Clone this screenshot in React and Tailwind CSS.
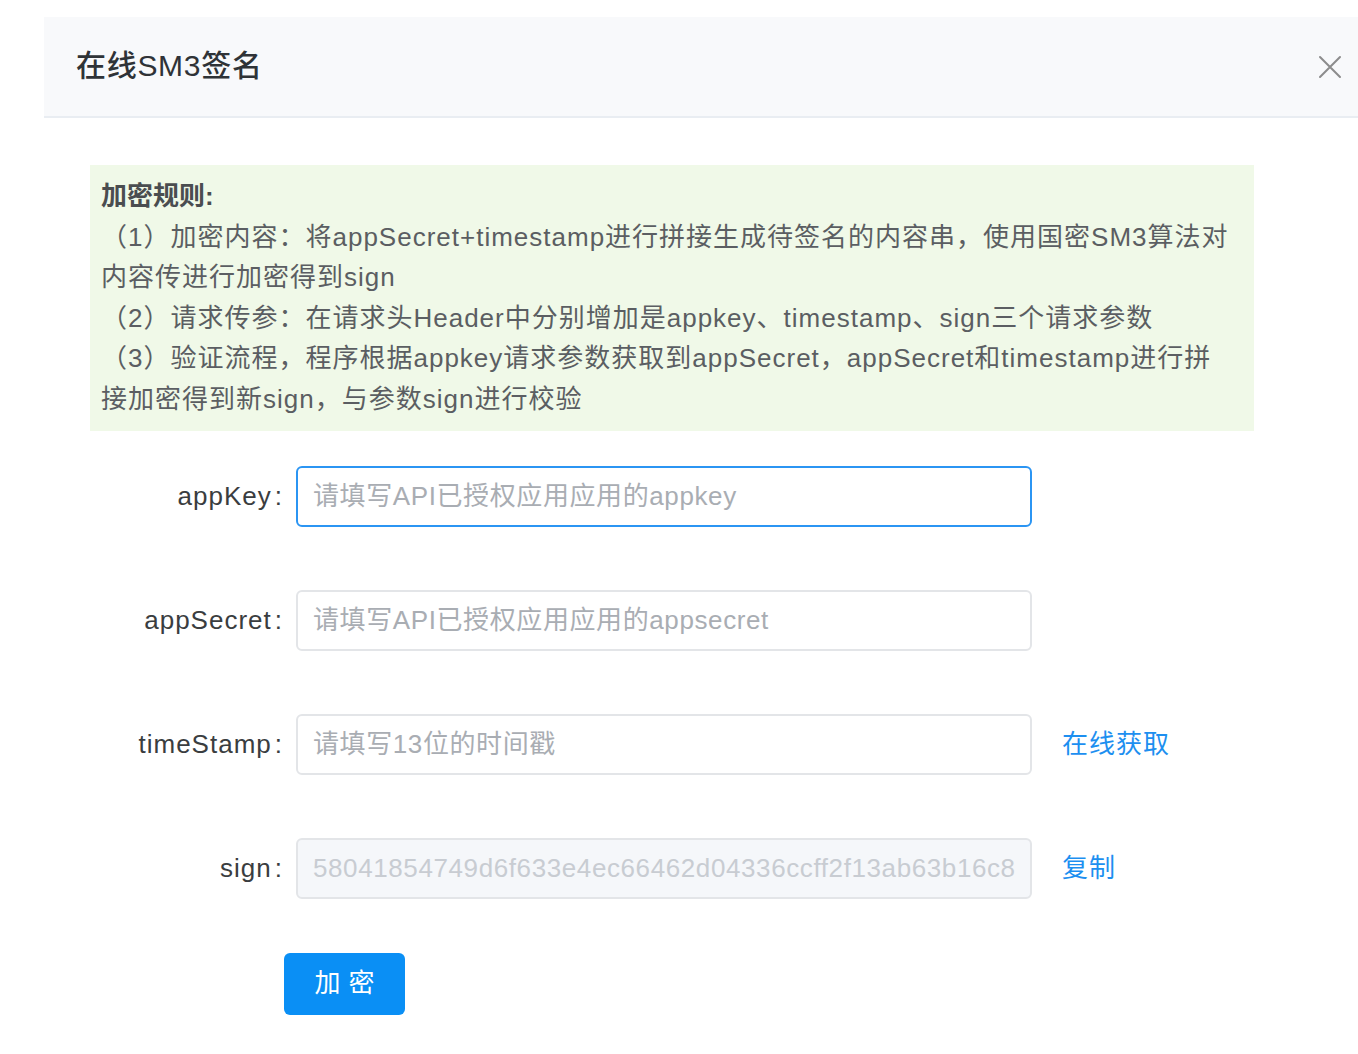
const FONT = '"Liberation Sans", "Noto Sans CJK SC", sans-serif';

const ROWS = [
  { label: 'appKey', placeholder: '请填写API已授权应用应用的appkey', focused: true },
  { label: 'appSecret', placeholder: '请填写API已授权应用应用的appsecret' },
  { label: 'timeStamp', placeholder: '请填写13位的时间戳', link: '在线获取' },
  { label: 'sign', value: '58041854749d6f633e4ec66462d04336ccff2f13ab63b16c8e0f1a', disabled: true, link: '复制' },
];

// rule text, broken where the reference wraps
const RULES = [
  '（1）加密内容：将appSecret+timestamp进行拼接生成待签名的内容串，使用国密SM3算法对',
  '内容传进行加密得到sign',
  '（2）请求传参：在请求头Header中分别增加是appkey、timestamp、sign三个请求参数',
  '（3）验证流程，程序根据appkey请求参数获取到appSecret，appSecret和timestamp进行拼',
  '接加密得到新sign，与参数sign进行校验',
];

function CloseIcon() {
  return (
    <svg width="24" height="24" viewBox="0 0 24 24" fill="none" stroke="#8c8c8c" strokeWidth="2" strokeLinecap="round">
      <path d="M2 2 L22 22 M22 2 L2 22" />
    </svg>
  );
}

export default function App() {
  return (
    <div className="min-h-[1054px] bg-white pt-[17px] pl-[44px]" style={{ fontFamily: FONT }}>
      <div className="h-[101px] flex items-center justify-between bg-[#f8f9fb] border-b-2 border-[#e9edf2] pl-[32px] pr-[16px]">
        <h1 className="text-[30px] tracking-[0.7px] text-[#2f3337] font-medium -mt-[2px]">在线SM3签名</h1>
        <CloseIcon />
      </div>

      <div className="pl-[46px] pt-[47px]">
        <div className="w-[1164px] bg-[#f0f9e8] pl-[11px] pr-[10px] pt-[11px] pb-[11px] text-[26px] tracking-[1px] leading-[40.6px] text-[#5b5e62] whitespace-nowrap overflow-hidden">
          <div className="font-bold text-[#4a4d50] tracking-normal">加密规则:</div>
          {RULES.map(line => <div key={line}>{line}</div>)}
        </div>

        <div className="pt-[35px] flex flex-col gap-[63px]">
          {ROWS.map(r => (
            <div key={r.label} className="flex items-center h-[61px]">
              <div className="w-[206px] pr-[13px] text-right text-[26px] tracking-[1px] text-[#3a3d40]">
                {r.label}<span className="ml-[3px]">:</span>
              </div>
              <div
                className={`w-[736px] h-[61px] rounded-[6px] border-2 flex items-center pl-[15px] pr-[14px] ${r.focused
                  ? 'border-[#2b95f3] bg-white'
                  : r.disabled
                    ? 'border-[#e3e5e8] bg-[#f5f7fa]'
                    : 'border-[#e3e5e8] bg-white'}`}
              >
                <span className={`block flex-1 overflow-hidden text-[26px] tracking-[0.6px] whitespace-nowrap ${r.disabled ? 'text-[#c8ccd2]' : 'text-[#a9adb3]'}`}>
                  {r.value || r.placeholder}
                </span>
              </div>
              {r.link && (
                <span className="ml-[30px] text-[26px] tracking-[1px] text-[#1d8ff0]">{r.link}</span>
              )}
            </div>
          ))}
        </div>

        <div className="pt-[54px] pl-[194px]">
          <button className="w-[121px] h-[62px] rounded-[6px] bg-[#0a8ff5] text-white text-[26px] tracking-[8px] pl-[8px]">
            加密
          </button>
        </div>
      </div>
    </div>
  );
}
